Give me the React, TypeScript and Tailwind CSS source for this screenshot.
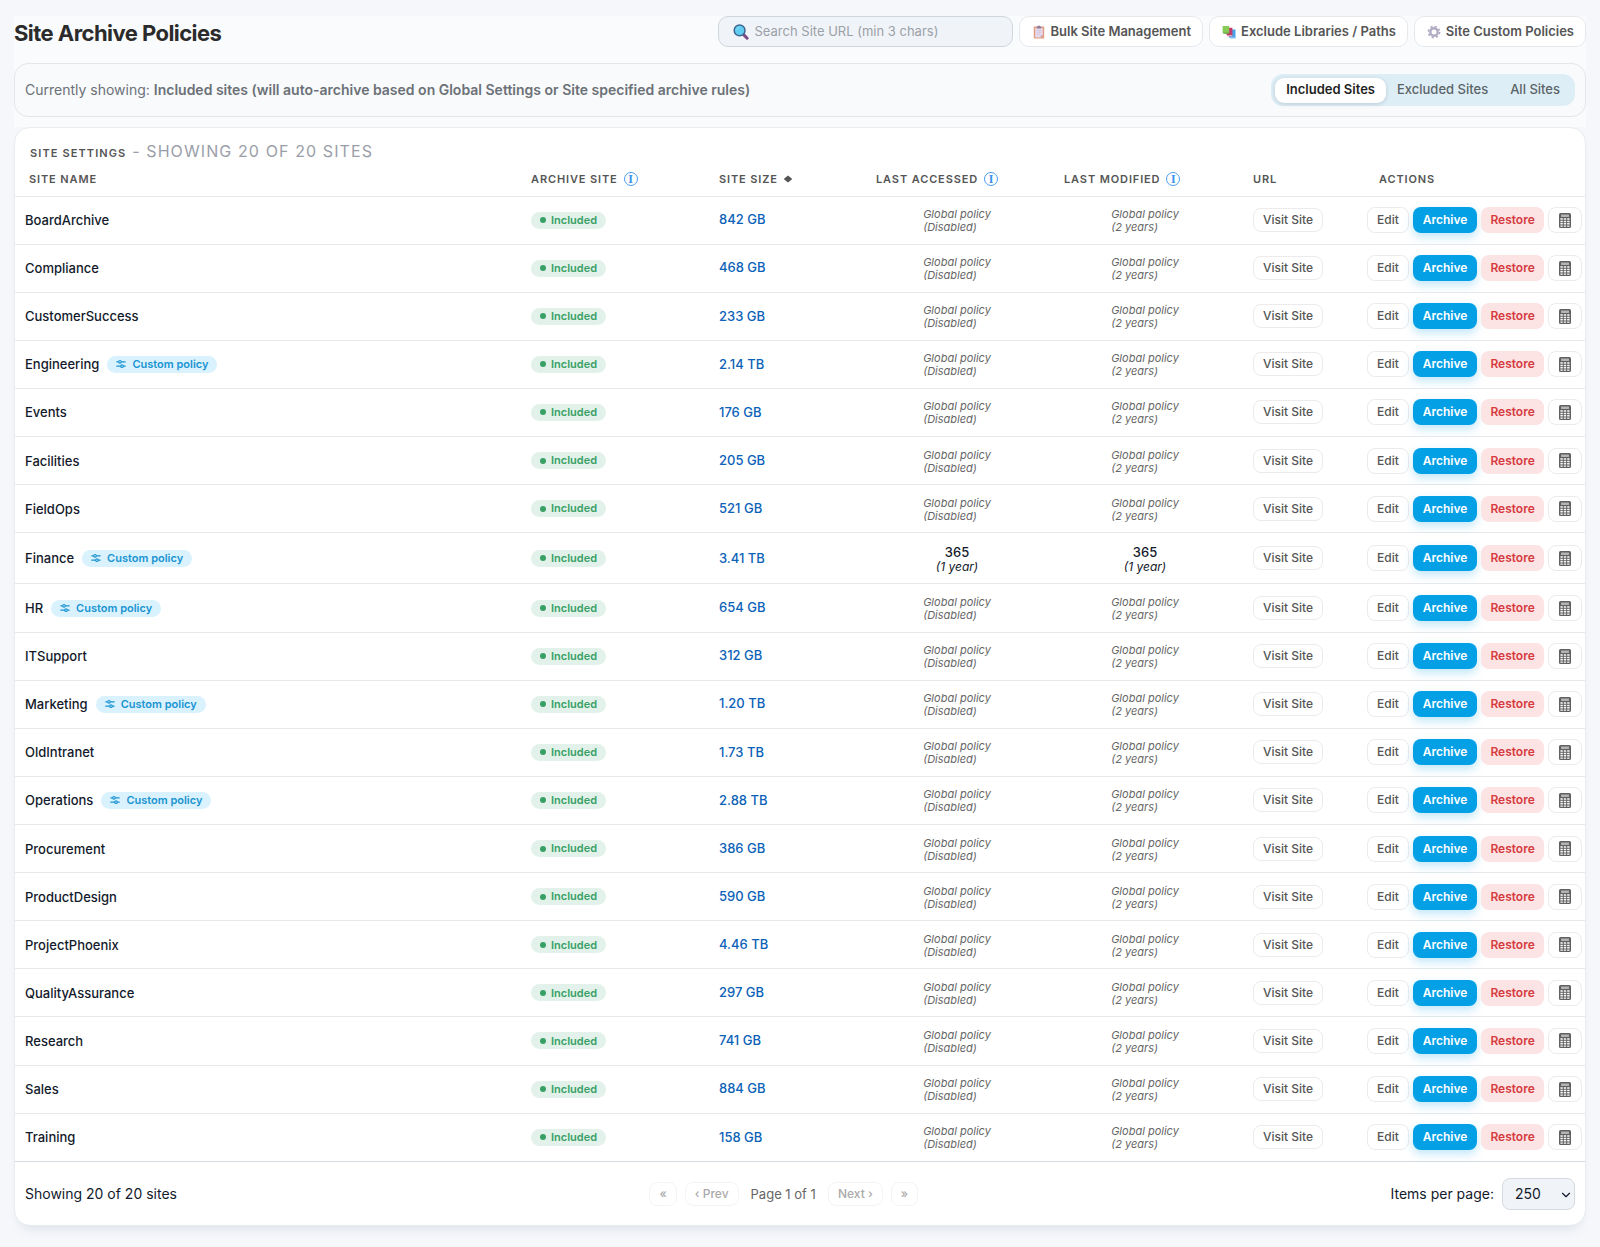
import React from "react";
import { ChevronDown } from "lucide-react";

type Site = { name: string; size: string; custom?: boolean; days?: string };

const sites: Site[] = [
  { name: "BoardArchive", size: "842 GB" },
  { name: "Compliance", size: "468 GB" },
  { name: "CustomerSuccess", size: "233 GB" },
  { name: "Engineering", size: "2.14 TB", custom: true },
  { name: "Events", size: "176 GB" },
  { name: "Facilities", size: "205 GB" },
  { name: "FieldOps", size: "521 GB" },
  { name: "Finance", size: "3.41 TB", custom: true, days: "365" },
  { name: "HR", size: "654 GB", custom: true },
  { name: "ITSupport", size: "312 GB" },
  { name: "Marketing", size: "1.20 TB", custom: true },
  { name: "OldIntranet", size: "1.73 TB" },
  { name: "Operations", size: "2.88 TB", custom: true },
  { name: "Procurement", size: "386 GB" },
  { name: "ProductDesign", size: "590 GB" },
  { name: "ProjectPhoenix", size: "4.46 TB" },
  { name: "QualityAssurance", size: "297 GB" },
  { name: "Research", size: "741 GB" },
  { name: "Sales", size: "884 GB" },
  { name: "Training", size: "158 GB" },
];

function SearchIcon() {
  return (
    <svg viewBox="0 0 16 16" className="size-4" aria-hidden="true">
      <path d="M10.6 10.6l3.5 3.6" stroke="#7b4a86" strokeWidth="3" strokeLinecap="round" />
      <circle cx="6.6" cy="6.4" r="5.4" fill="#5fcdf0" stroke="#3f6690" strokeWidth="1.5" />
      <path d="M3.6 5.6a3.4 3.4 0 0 1 2.6-2.3" stroke="#93e2f8" strokeWidth="1" fill="none" strokeLinecap="round" />
    </svg>
  );
}

function ClipboardIcon() {
  return (
    <svg viewBox="0 0 14 14" className="size-3.5" aria-hidden="true">
      <rect x="1.8" y="1.4" width="10.4" height="12.2" rx="0.8" fill="#e39a7c" />
      <path d="M3.2 2.8h7.6v7.4l-2.2 2.2H3.2z" fill="#e6daec" />
      <path d="M8.6 12.4v-2.2h2.2z" fill="#b9a3c6" />
      <path d="M4.8 5.5h4.4M4.8 7.3h4.4M4.8 9.1h2.8" stroke="#c9bad6" strokeWidth="0.6" />
      <path d="M4.7 1.6h1.2a1.1 1.1 0 0 1 2.2 0h1.2v1.8H4.7z" fill="#8f7a96" />
    </svg>
  );
}

function BooksIcon() {
  return (
    <svg viewBox="0 0 14 14" className="size-3.5" aria-hidden="true">
      <path d="M7 4.5h6.5v8.7H8L7 12z" fill="#4aa3e8" />
      <path d="M7 12l1 1.2h5.5v-1H8z" fill="#8fd0f5" />
      <path d="M4.6 2.8h5.8v8.4H6L4.6 10z" fill="#c23a68" />
      <path d="M4.6 10L6 11.2h4.4v-1H6z" fill="#e9c2d2" />
      <path d="M.6 1h6.6v7.6H1.7L.6 7.6z" fill="#86cb55" />
      <path d="M.6 7.6l1.1 1h5.5V7.7H1.6z" fill="#4b8f3a" />
    </svg>
  );
}

function GearIcon() {
  return (
    <svg viewBox="0 0 14 14" className="size-3.5" aria-hidden="true">
      <g stroke="#b1aac3" fill="none">
        <circle cx="7" cy="7" r="5.6" strokeWidth="1.6" strokeDasharray="2.2 2.2" />
        <circle cx="7" cy="7" r="3.7" strokeWidth="2.4" />
      </g>
    </svg>
  );
}

function SlidersIcon() {
  return (
    <svg viewBox="0 0 10 10" className="size-2.5" fill="none" stroke="currentColor" strokeLinecap="round" aria-hidden="true">
      <path d="M.8 2.8h1.8M5.4 2.8h3.8M.8 7.2h3.8M7.4 7.2h1.8" strokeWidth="1.2" />
      <circle cx="4" cy="2.8" r="1.3" strokeWidth="1.1" />
      <circle cx="6" cy="7.2" r="1.3" strokeWidth="1.1" />
    </svg>
  );
}

function CalculatorIcon() {
  return (
    <svg viewBox="0 0 12 15" className="h-[15px] w-3" aria-hidden="true">
      <rect width="12" height="15" rx="1.6" fill="#606060" />
      <rect x="2" y="1.4" width="8" height="2.6" rx="0.4" fill="#b4b4b4" />
      <g fill="#fafafa">
        <path d="M1.4 5.3h2.4v1.5H1.4zM4.8 5.3h2.4v1.5H4.8zM8.2 5.3h2.4v1.5H8.2z" />
        <path d="M1.4 7.7h2.4v1.5H1.4zM4.8 7.7h2.4v1.5H4.8zM8.2 7.7h2.4v1.5H8.2z" />
        <path d="M1.4 10.1h2.4v1.5H1.4zM4.8 10.1h2.4v1.5H4.8zM8.2 10.1h2.4v1.5H8.2z" />
        <path d="M1.4 12.4h2.4v1.3H1.4zM4.8 12.4h2.4v1.3H4.8zM8.2 12.4h2.4v1.3H8.2z" />
      </g>
    </svg>
  );
}

function Info({ label }: { label: string }) {
  return (
    <button
      type="button"
      aria-label={label}
      className="ml-1.5 inline-flex size-3.5 items-center justify-center rounded-full border border-[#4a9cf0] font-['Liberation_Serif',serif] text-xs leading-none font-bold tracking-normal text-[#3a90ee]"
    >
      I
    </button>
  );
}

function ToolButton({ icon, children }: { icon: React.ReactNode; children: React.ReactNode }) {
  return (
    <button
      type="button"
      className="flex h-[31px] items-center gap-[5px] rounded-[10px] border border-[#e6e9ec] bg-white pr-[11px] pl-3 text-[13px] font-semibold whitespace-nowrap text-[#555]"
    >
      {icon}
      {children}
    </button>
  );
}

function Policy({ days, detail }: { days?: string; detail: string }) {
  if (days) {
    return (
      <div className="py-[10px] text-center">
        <div className="text-[13px] leading-4 font-medium">{days}</div>
        <div className="text-xs leading-[13px] italic">(1 year)</div>
      </div>
    );
  }
  return (
    <div className="mx-auto w-fit pt-[11px] pb-[9px] text-[11px] leading-[13px] text-[#666] italic">
      Global policy
      <br />({detail})
    </div>
  );
}

function SiteRow({ site }: { site: Site }) {
  return (
    <tr className="border-t border-[#e6e8ec]">
      <td className="pl-2.5">
        <div className="flex items-center gap-2 text-[13px] leading-5 font-medium">
          {site.name}
          {site.custom && (
            <span className="flex h-[17px] items-center gap-1.5 rounded-full bg-[#d9f2fd] px-[9px] text-[11px] font-semibold text-[#1a94d2]">
              <SlidersIcon />
              Custom policy
            </span>
          )}
        </div>
      </td>
      <td className="pl-2.5">
        <span className="flex h-[17px] w-fit items-center gap-[5px] rounded-full bg-[#e2f2ea] px-[9px] text-[11px] font-semibold text-[#38a065]">
          <span className="size-1.5 rounded-full bg-[#38a065]" />
          Included
        </span>
      </td>
      <td className="pl-2.5 text-[13px] font-medium text-[#0b62b8]">{site.size}</td>
      <td>
        <Policy days={site.days} detail="Disabled" />
      </td>
      <td>
        <Policy days={site.days} detail="2 years" />
      </td>
      <td className="pl-3.5">
        <a
          href="#"
          className="flex h-6 w-fit items-center rounded-lg border border-[#ebebee] bg-white px-[9px] text-xs font-medium text-[#555]"
        >
          Visit Site
        </a>
      </td>
      <td className="pl-2.5">
        <div className="flex gap-1 text-xs font-medium">
          <button type="button" className="h-[26px] rounded-lg border border-[#ebebee] bg-white px-[9px] text-[#555]">
            Edit
          </button>
          <button
            type="button"
            className="h-[26px] rounded-lg bg-[#04a0e6] px-2.5 font-semibold text-white shadow-[0_4px_10px_rgba(4,160,230,0.25)]"
          >
            Archive
          </button>
          <button type="button" className="h-[26px] rounded-lg bg-[#fce4e4] px-[9px] font-semibold text-[#d63a3f]">
            Restore
          </button>
          <button
            type="button"
            aria-label="Calculate size"
            className="flex h-[26px] items-center rounded-lg border border-[#ebebee] bg-white px-2.5"
          >
            <CalculatorIcon />
          </button>
        </div>
      </td>
    </tr>
  );
}

function PageButton({ children, label }: { children: React.ReactNode; label: string }) {
  return (
    <button
      type="button"
      disabled
      aria-label={label}
      className="h-6 rounded-lg border border-[#f4f4f6] bg-white px-[9px] text-xs font-medium text-[#aaa]"
    >
      {children}
    </button>
  );
}

export default function App() {
  return (
    <div className="flex min-h-screen flex-col bg-[#f5f7fb] px-3.5 pt-4 pb-[21px] font-['Inter',sans-serif] text-[#131a2b]">
      <div className="bg-[#fafbfd] pb-2.5">
        <header className="flex items-center gap-1.5">
          <h1 className="mr-auto pt-1 text-[22px] leading-[27px] font-bold tracking-tight text-[#2b2b2b]">
            Site Archive Policies
          </h1>
          <div className="flex h-[31px] w-[295px] items-center gap-1.5 rounded-[10px] border border-[#d0d7dc] bg-[#f0f4f8] px-3.5">
            <SearchIcon />
            <input
              type="search"
              aria-label="Search Site URL"
              placeholder="Search Site URL (min 3 chars)"
              className="min-w-0 flex-1 bg-transparent text-[13px] outline-none placeholder:text-[#9ba0a8]"
            />
          </div>
          <ToolButton icon={<ClipboardIcon />}>Bulk Site Management</ToolButton>
          <ToolButton icon={<BooksIcon />}>Exclude Libraries / Paths</ToolButton>
          <ToolButton icon={<GearIcon />}>Site Custom Policies</ToolButton>
        </header>

        <section className="mt-4 flex items-center justify-between rounded-[14px] border border-[#e3e7ea] bg-[#f9fafc] px-2.5 py-2.5">
          <p className="text-sm text-[#6b7177]">
            Currently showing:{" "}
            <strong className="font-semibold">
              Included sites (will auto-archive based on Global Settings or Site specified archive rules)
            </strong>
          </p>
          <div className="flex h-8 items-center rounded-xl bg-[#deeef6] px-1 text-[13px] font-medium text-[#5b6468]">
            <button
              type="button"
              aria-pressed="true"
              className="h-[25px] rounded-[9px] bg-white px-[11px] font-semibold text-[#1f1f1f] shadow-[0_1px_4px_rgba(30,60,90,0.2)]"
            >
              Included Sites
            </button>
            <button type="button" className="h-[25px] px-[11px]">
              Excluded Sites
            </button>
            <button type="button" className="h-[25px] px-[11px]">
              All Sites
            </button>
          </div>
        </section>
      </div>

      <main className="flex grow flex-col rounded-2xl border border-[#e8ebef] bg-white shadow-[0_8px_12px_-6px_rgba(30,50,70,0.12)]">
        <h2 className="px-[15px] pt-3 text-[11px] leading-[22px] font-semibold tracking-widest text-[#555] uppercase">
          Site Settings{" "}
          <span className="ml-0.5 text-base leading-[22px] font-normal text-[#9a9ea8]">- Showing 20 of 20 sites</span>
        </h2>
        <table className="w-full grow table-fixed border-collapse text-left">
          <colgroup>
            <col />
            <col className="w-[188px]" />
            <col className="w-[154px]" />
            <col className="w-[188px]" />
            <col className="w-[188px]" />
            <col className="w-[118px]" />
            <col className="w-[228px]" />
          </colgroup>
          <thead>
            <tr className="h-8 text-[11px] tracking-[0.08em] text-[#555] uppercase [&>th]:pb-0.5 [&>th]:font-semibold">
              <th className="pl-3.5">Site Name</th>
              <th className="pl-2.5">
                <span className="flex items-center">
                  Archive Site
                  <Info label="About archive site" />
                </span>
              </th>
              <th className="pl-2.5" aria-sort="none">
                <button type="button" className="flex items-center gap-1.5 font-semibold tracking-[0.08em] uppercase">
                  Site Size
                  <svg viewBox="0 0 8 8" className="size-2" fill="currentColor" aria-hidden="true">
                    <path d="M4 .4l3.8 3.2v.8L4 7.6.2 4.4v-.8z" />
                  </svg>
                </button>
              </th>
              <th className="pl-[13px]">
                <span className="flex items-center">
                  Last Accessed
                  <Info label="About last accessed" />
                </span>
              </th>
              <th className="pl-[13px]">
                <span className="flex items-center">
                  Last Modified
                  <Info label="About last modified" />
                </span>
              </th>
              <th className="pl-3.5">URL</th>
              <th className="pl-[22px]">Actions</th>
            </tr>
          </thead>
          <tbody>
            {sites.map((site) => (
              <SiteRow key={site.name} site={site} />
            ))}
          </tbody>
        </table>
        <footer className="flex items-center justify-between border-t border-[#d5dade] px-2.5 pt-4 pb-[15px] text-sm">
          <span>Showing 20 of 20 sites</span>
          <nav aria-label="Pagination" className="flex items-center gap-2">
            <PageButton label="First page">«</PageButton>
            <PageButton label="Previous page">‹ Prev</PageButton>
            <span className="px-1 text-[13px] text-[#666]">Page 1 of 1</span>
            <PageButton label="Next page">Next ›</PageButton>
            <PageButton label="Last page">»</PageButton>
          </nav>
          <label className="flex items-center gap-2">
            Items per page:
            <span className="relative flex">
              <select
                defaultValue="250"
                className="h-8 w-[73px] appearance-none rounded-lg border border-[#d5dade] bg-[#f0f4f8] pl-3 text-sm"
              >
                <option>50</option>
                <option>100</option>
                <option>250</option>
              </select>
              <ChevronDown className="pointer-events-none absolute top-2.5 right-0.5 size-3.5" strokeWidth={2} />
            </span>
          </label>
        </footer>
      </main>
    </div>
  );
}
